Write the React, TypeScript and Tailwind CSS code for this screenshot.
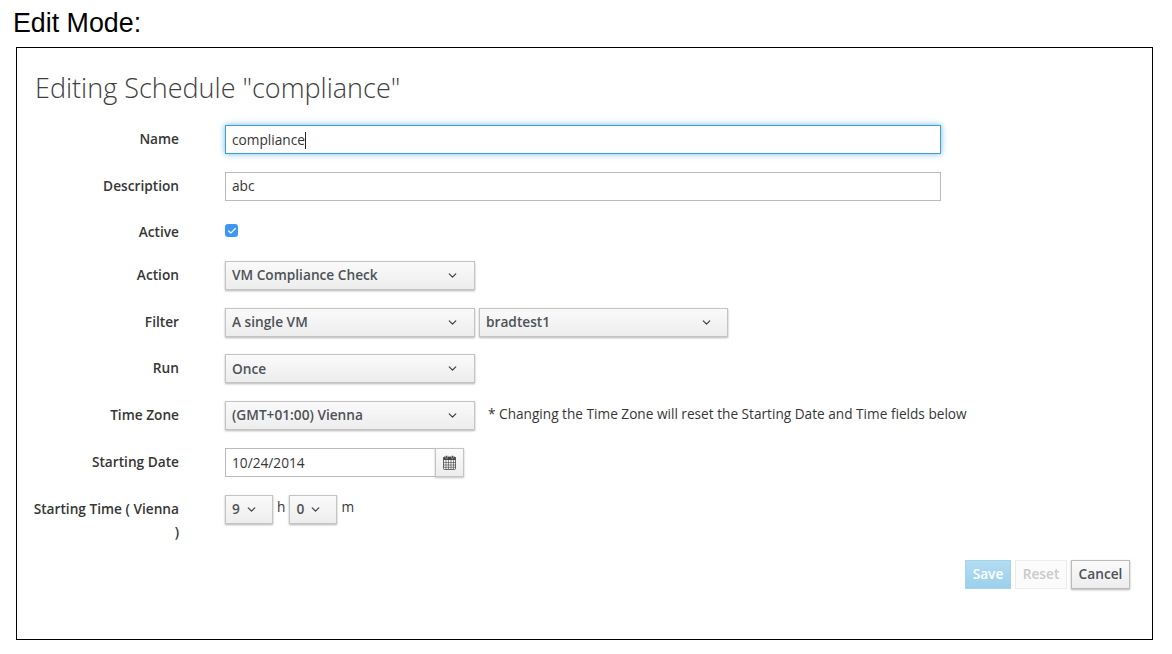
import { ChevronDown, Check } from "lucide-react";

const labelCls = "w-[146px] -ml-[2px] shrink-0 text-right whitespace-nowrap text-[13.7px] leading-[23px] font-semibold text-[#363636] pt-[2px]";

const Select = ({ value, className }: { value: string; className: string }) => (
    <div className={`h-[29px] flex items-center justify-between pl-[6px] border border-[#c4c4c4] bg-gradient-to-b from-[#fafafa] to-[#ededed] shadow-[0_1px_2px_rgba(0,0,0,0.3)] text-[13.7px] font-semibold text-[#4d5258] ${className}`}>
        <span className="whitespace-nowrap">{value}</span>
        <ChevronDown size={13} strokeWidth={2.2} className="text-[#3a3f44]" />
    </div>
);

const Row = ({ label, children, short }: { label: React.ReactNode; children?: React.ReactNode; short?: boolean }) => (
    <div className={`flex gap-[46px] mb-[16.7px] ${short ? "min-h-[26px]" : "min-h-[30px]"}`}>
        <div className={labelCls}>{label}</div>
        <div className="flex items-start">{children}</div>
    </div>
);

const CalendarIcon = () => (
    <svg width="13" height="15" viewBox="0 0 13 15" className="text-[#444]">
        <rect x="0.5" y="2" width="12" height="12.5" rx="1" fill="none" stroke="currentColor" strokeWidth="0.8" />
        <rect x="0.5" y="2" width="12" height="3" fill="currentColor" />
        <rect x="2.7" y="0.5" width="1.8" height="3.2" rx="0.9" fill="currentColor" stroke="#f4f4f4" strokeWidth="0.4" />
        <rect x="8.5" y="0.5" width="1.8" height="3.2" rx="0.9" fill="currentColor" stroke="#f4f4f4" strokeWidth="0.4" />
        <path d="M3 5V14M5.5 5V14M8 5V14M10.5 5V14M0.5 7.5H12.5M0.5 10H12.5M0.5 12.3H12.5" stroke="currentColor" strokeWidth="0.6" fill="none" />
    </svg>
);

export default function App() {
    return (
        <div className="w-[1172px] h-[654px] bg-white overflow-hidden font-['Open_Sans',sans-serif]">
            <div className="h-[47px] pl-[13px] pt-[8px] text-[26.8px] leading-[30px] text-black font-['Liberation_Sans',sans-serif]">Edit Mode:</div>
            <div className="ml-[16px] w-[1137px] h-[593px] border border-black pl-[18px] flex flex-col">
                <h1 className="mt-[22px] h-[55px] text-[27px] leading-[36px] font-light text-[#404040]">Editing Schedule "compliance"</h1>

                <Row label="Name">
                    <div className="w-[716px] h-[29px] flex items-center pl-[6px] pt-[1px] border border-[#3f9fd8] shadow-[0_0_6px_rgba(63,159,216,0.75)] text-[13.7px] text-[#363636]">
                        compliance<span className="w-px h-[17px] bg-[#222]" />
                    </div>
                </Row>
                <Row label="Description">
                    <div className="w-[716px] h-[29px] flex items-center pl-[6px] pt-[1px] border border-[#bbbbbb] text-[13.7px] text-[#363636]">abc</div>
                </Row>
                <Row label="Active" short>
                    <div className="mt-[6px] w-[13px] h-[13px] rounded-[3px] bg-[#3f97f5] flex items-center justify-center">
                        <Check size={10} strokeWidth={3} className="text-white" />
                    </div>
                </Row>
                <Row label="Action">
                    <Select value="VM Compliance Check" className="w-[250px] pr-[15px]" />
                </Row>
                <Row label="Filter">
                    <Select value="A single VM" className="w-[250px] pr-[15px]" />
                    <Select value="bradtest1" className="w-[249px] ml-[4px] pr-[14px]" />
                </Row>
                <Row label="Run">
                    <Select value="Once" className="w-[250px] pr-[15px]" />
                </Row>
                <Row label="Time Zone">
                    <Select value="(GMT+01:00) Vienna" className="w-[250px] pr-[15px]" />
                    <span className="ml-[13px] pt-[3px] text-[13.65px] leading-[20px] text-[#363636] whitespace-nowrap">* Changing the Time Zone will reset the Starting Date and Time fields below</span>
                </Row>
                <Row label="Starting Date">
                    <div className="w-[210px] h-[29px] flex items-center pl-[6px] pt-[1px] border border-[#bbbbbb] border-r-0 text-[13.7px] text-[#363636]">10/24/2014</div>
                    <div className="w-[29px] h-[29px] flex items-center justify-center border border-[#c4c4c4] bg-gradient-to-b from-[#fafafa] to-[#ededed] shadow-[0_1px_2px_rgba(0,0,0,0.25)]">
                        <CalendarIcon />
                    </div>
                </Row>
                <Row label={<>Starting Time ( Vienna<br />)</>}>
                    <Select value="9" className="w-[48px] pr-[14px]" />
                    <span className="mx-[4px] pt-[2px] text-[13.7px] leading-[20px] text-[#363636]">h</span>
                    <Select value="0" className="w-[48px] pr-[14px]" />
                    <span className="ml-[4px] pt-[2px] text-[13.7px] leading-[20px] text-[#363636]">m</span>
                </Row>

                <div className="flex justify-end gap-[4px] pr-[22px] mt-[1px]">
                    <div className="w-[46px] h-[29px] flex items-center justify-center border border-[#a5d3ea] bg-gradient-to-b from-[#b3dcf2] to-[#9bd0ec] text-[13.7px] font-semibold text-white">Save</div>
                    <div className="w-[52px] h-[29px] flex items-center justify-center border border-[#ececec] bg-[#fbfbfb] text-[13.7px] font-semibold text-[#c9c9c9]">Reset</div>
                    <div className="w-[59px] h-[29px] flex items-center justify-center border border-[#bbbbbb] bg-gradient-to-b from-[#fafafa] to-[#ededed] shadow-[0_1px_2px_rgba(0,0,0,0.3)] text-[13.7px] font-semibold text-[#4d5258]">Cancel</div>
                </div>
            </div>
        </div>
    );
}
